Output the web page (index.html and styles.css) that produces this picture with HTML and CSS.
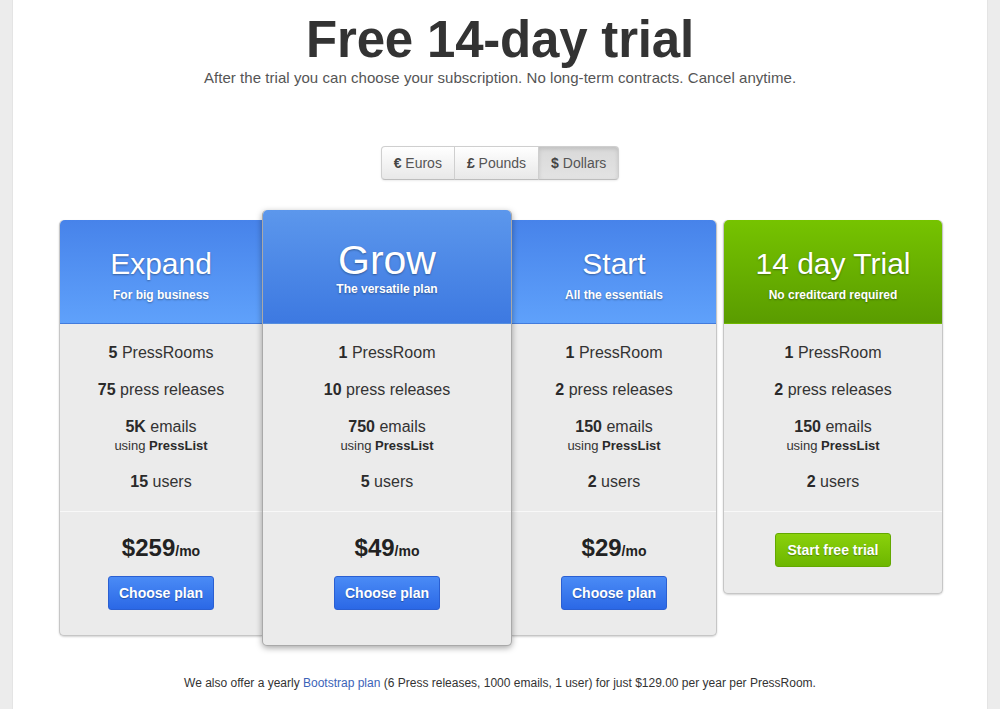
FILE: index.html
```html
<!DOCTYPE html>
<html lang="en">
<head>
<meta charset="utf-8">
<title>Free 14-day trial</title>
<link rel="stylesheet" href="styles.css">
</head>
<body>
<div class="page">
  <header class="intro">
    <h1 class="title">Free 14-day trial</h1>
    <p class="lead">After the trial you can choose your subscription. No long-term contracts. Cancel anytime.</p>
  </header>

  <div class="toggle-wrap">
    <div class="currency">
      <button class="cur"><b>€</b> Euros</button>
      <button class="cur"><b>£</b> Pounds</button>
      <button class="cur active"><b>$</b> Dollars</button>
    </div>
  </div>

  <div class="plans">
    <div class="plan plan-expand">
      <div class="plan-head blue-up">
        <h2 class="plan-name">Expand</h2>
        <p class="plan-sub">For big business</p>
      </div>
      <div class="plan-body">
        <div class="feat"><b>5</b> PressRooms</div>
        <div class="feat"><b>75</b> press releases</div>
        <div class="feat"><b>5K</b> emails<div class="feat-note">using <b>PressList</b></div></div>
        <div class="feat"><b>15</b> users</div>
      </div>
      <div class="plan-foot">
        <div class="price"><b>$259</b><span class="per">/mo</span></div>
        <button class="btn btn-blue">Choose plan</button>
      </div>
    </div>

    <div class="plan plan-grow">
      <div class="plan-head blue-down">
        <h2 class="plan-name big">Grow</h2>
        <p class="plan-sub">The versatile plan</p>
      </div>
      <div class="plan-body">
        <div class="feat"><b>1</b> PressRoom</div>
        <div class="feat"><b>10</b> press releases</div>
        <div class="feat"><b>750</b> emails<div class="feat-note">using <b>PressList</b></div></div>
        <div class="feat"><b>5</b> users</div>
      </div>
      <div class="plan-foot">
        <div class="price"><b>$49</b><span class="per">/mo</span></div>
        <button class="btn btn-blue">Choose plan</button>
      </div>
    </div>

    <div class="plan plan-start">
      <div class="plan-head blue-up">
        <h2 class="plan-name">Start</h2>
        <p class="plan-sub">All the essentials</p>
      </div>
      <div class="plan-body">
        <div class="feat"><b>1</b> PressRoom</div>
        <div class="feat"><b>2</b> press releases</div>
        <div class="feat"><b>150</b> emails<div class="feat-note">using <b>PressList</b></div></div>
        <div class="feat"><b>2</b> users</div>
      </div>
      <div class="plan-foot">
        <div class="price"><b>$29</b><span class="per">/mo</span></div>
        <button class="btn btn-blue">Choose plan</button>
      </div>
    </div>

    <div class="plan plan-trial">
      <div class="plan-head green">
        <h2 class="plan-name">14 day Trial</h2>
        <p class="plan-sub">No creditcard required</p>
      </div>
      <div class="plan-body">
        <div class="feat"><b>1</b> PressRoom</div>
        <div class="feat"><b>2</b> press releases</div>
        <div class="feat"><b>150</b> emails<div class="feat-note">using <b>PressList</b></div></div>
        <div class="feat"><b>2</b> users</div>
      </div>
      <div class="plan-foot trial-foot">
        <button class="btn btn-green">Start free trial</button>
      </div>
    </div>
  </div>

  <p class="note">We also offer a yearly <a href="#" class="link">Bootstrap plan</a> (6 Press releases, 1000 emails, 1 user) for just $129.00 per year per PressRoom.</p>
</div>
</body>
</html>
```

FILE: styles.css
```css
* { box-sizing: border-box; }

html, body {
  margin: 0;
  padding: 0;
}

body {
  background: #ececec;
  font-family: "Liberation Sans", Arial, Helvetica, sans-serif;
  color: #333;
}

.page {
  margin: 0 12px;
  background: #fff;
  min-height: 709px;
  padding-top: 12px;
  border-left: 1px solid #e4e4e4;
  border-right: 1px solid #e4e4e4;
}

.intro {
  text-align: center;
}

.title {
  margin: 0;
  font-size: 51px;
  line-height: 56px;
  font-weight: bold;
  color: #333;
  letter-spacing: -0.2px;
}

.lead {
  margin: 0;
  font-size: 15px;
  line-height: 20px;
  color: #555;
  letter-spacing: 0.05px;
}

.toggle-wrap {
  display: flex;
  justify-content: center;
  margin-top: 58px;
}

.currency {
  display: inline-flex;
  border-radius: 4px;
  box-shadow: 0 1px 2px rgba(0, 0, 0, 0.08);
}

.cur {
  font-family: inherit;
  font-size: 14px;
  line-height: 20px;
  padding: 6px 12px;
  color: #555;
  background: linear-gradient(#ffffff, #e8e8e8);
  border: 1px solid #cfcfcf;
  border-bottom-color: #bdbdbd;
  margin: 0 0 0 -1px;
  cursor: pointer;
}

.cur b { color: #444; }

.cur:first-child {
  margin-left: 0;
  border-radius: 4px 0 0 4px;
}

.cur:last-child {
  border-radius: 0 4px 4px 0;
}

.cur.active {
  background: linear-gradient(#d9d9d9, #e3e3e3);
  box-shadow: inset 0 2px 4px rgba(0, 0, 0, 0.12);
}

.plans {
  display: flex;
  justify-content: center;
  align-items: flex-start;
  margin-top: 30px;
  padding-left: 2px;
}

.plan {
  margin-top: 10px;
  background: #ebebeb;
  border: 1px solid #c6c6c6;
  border-top: 0;
  border-radius: 5px;
  box-shadow: 0 1px 2px rgba(0, 0, 0, 0.18);
  text-align: center;
  position: relative;
}

.plan-expand { width: 203px; border-right: 0; border-radius: 5px 0 0 5px; }
.plan-start { width: 205px; border-left: 0; border-radius: 0 5px 5px 0; }
.plan-trial { width: 220px; margin-left: 6px; }

.plan-grow {
  width: 250px;
  margin-top: 0;
  z-index: 2;
  border: 1px solid #a9a9a9;
  border-top: 0;
  box-shadow: 0 2px 6px rgba(0, 0, 0, 0.35);
}

.plan-head {
  color: #fff;
  padding: 27px 8px 20px;
  border-bottom: 1px solid rgba(0, 0, 0, 0.06);
  text-shadow: 0 1px 2px rgba(0, 0, 0, 0.35);
}

.plan-expand .plan-head { border-radius: 5px 0 0 0; }
.plan-start .plan-head { border-radius: 0 5px 0 0; }
.plan-trial .plan-head,
.plan-grow .plan-head { border-radius: 5px 5px 0 0; }

.blue-up { background: linear-gradient(#4783ea, #5fa1fb); }
.blue-down { background: linear-gradient(#5c97ec, #3d79e1); padding: 29px 8px 26px; }
.green { background: linear-gradient(#76c300, #5a9c00); }

.plan-name {
  margin: 0 0 6px;
  font-size: 30px;
  line-height: 34px;
  font-weight: normal;
}

.plan-name.big {
  font-size: 41px;
  line-height: 42px;
  margin-bottom: 0;
}

.plan-sub {
  margin: 0;
  font-size: 12px;
  line-height: 16px;
  font-weight: bold;
}

.plan-body {
  padding: 19px 8px;
  display: flex;
  flex-direction: column;
  gap: 17px;
  border-bottom: 1px solid #f8f8f8;
}

.feat {
  font-size: 16px;
  line-height: 20px;
  color: #333;
}

.feat b { color: #2a2a2a; }

.feat-note {
  font-size: 13px;
  line-height: 18px;
}

.plan-foot {
  padding: 22px 8px 25px;
}

.plan-grow .plan-foot { padding-bottom: 35px; }

.trial-foot { padding: 21px 8px 26px; }

.price {
  font-size: 24px;
  line-height: 28px;
  height: 28px;
  color: #222;
  margin-bottom: 14px;
}

.price .per {
  font-size: 14px;
  font-weight: bold;
  line-height: 1;
}

.btn {
  font-family: inherit;
  font-size: 14px;
  font-weight: bold;
  line-height: 20px;
  padding: 6px 10px;
  color: #fff;
  border-radius: 3px;
  text-shadow: 0 1px 1px rgba(0, 0, 0, 0.3);
  cursor: pointer;
}

.btn-blue {
  background: linear-gradient(#4a8bf6, #2b68e6);
  border: 1px solid #2a5fd2;
}

.btn-green {
  padding: 6px 11px;
  background: linear-gradient(#8ad10b, #6db600);
  border: 1px solid #63a800;
}

.note {
  margin: 28px 0 0;
  text-align: center;
  font-size: 12px;
  line-height: 18px;
  color: #333;
}

.link {
  color: #3b63b8;
  text-decoration: none;
}
```
